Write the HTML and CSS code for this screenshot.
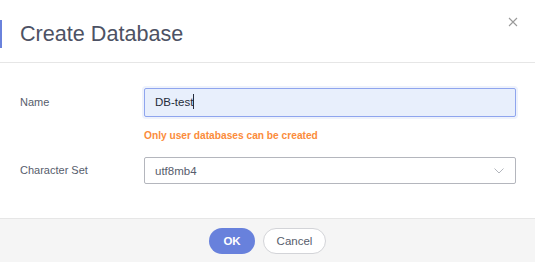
FILE: index.html
```html
<!DOCTYPE html>
<html lang="en">
<head>
  <meta charset="UTF-8">
  <meta name="viewport" content="width=device-width, initial-scale=1.0">
  <title>Create Database</title>
  <link rel="stylesheet" href="styles.css">
</head>
<body>
  <div class="dialog">
    <div class="dialog-header">
      <h1 class="dialog-title">Create Database</h1>
      <button class="close-btn" aria-label="Close">
        <svg width="10" height="10" viewBox="0 0 10 10">
          <path d="M1 1 L9 9 M9 1 L1 9" stroke="#9a9a9a" stroke-width="1.1" fill="none"/>
        </svg>
      </button>
    </div>

    <div class="dialog-body">
      <div class="form-row">
        <label class="form-label" for="db-name">Name</label>
        <div class="form-control">
          <div class="text-input focused" id="db-name">DB-test<span class="caret"></span></div>
          <div class="hint">Only user databases can be created</div>
        </div>
      </div>
      <div class="form-row">
        <label class="form-label">Character Set</label>
        <div class="form-control">
          <div class="select">
            <span>utf8mb4</span>
            <svg width="10" height="6" viewBox="0 0 10 6">
              <path d="M0.5 0.5 L5 5 L9.5 0.5" stroke="#b3b6bd" stroke-width="1" fill="none"/>
            </svg>
          </div>
        </div>
      </div>
    </div>

    <div class="dialog-footer">
      <button class="btn btn-primary">OK</button>
      <button class="btn btn-default">Cancel</button>
    </div>
  </div>
</body>
</html>
```

FILE: styles.css
```css
body {
  margin: 0;
  font-family: "Liberation Sans", Arial, sans-serif;
  background-color: #fff;
  color: #575d6c;
}
.dialog {
  width: 535px;
  height: 262px;
  display: flex;
  flex-direction: column;
  background-color: #fff;
}
.dialog-header {
  height: 62px;
  border-bottom: 1px solid #e6e6e6;
  display: flex;
  justify-content: space-between;
  align-items: flex-start;
  box-sizing: content-box;
}
.dialog-title {
  margin: 20px 0 0 0;
  height: 28px;
  line-height: 28px;
  border-left: 2px solid #6a82dc;
  padding-left: 18px;
  font-size: 21.6px;
  font-weight: normal;
  color: #4d5264;
}
.close-btn {
  background: none;
  border: none;
  padding: 0;
  margin: 17px 17px 0 0;
  width: 10px;
  height: 10px;
  cursor: pointer;
  display: flex;
}
.dialog-body {
  flex: 1;
  padding: 25px 19px 0 20px;
}
.form-row {
  display: flex;
  margin-bottom: 14px;
}
.form-label {
  width: 124px;
  flex-shrink: 0;
  font-size: 11px;
  line-height: 29px;
  color: #575d6c;
}
.form-row:last-child .form-label {
  line-height: 27px;
}
.form-control {
  flex: 1;
}
.text-input {
  height: 29px;
  box-sizing: border-box;
  border: 1px solid #8fa5ee;
  border-radius: 2px;
  background-color: #e8effc;
  box-shadow: 0 0 0 2px #eef2fc;
  padding: 0 10px;
  font-size: 11.5px;
  line-height: 27px;
  color: #252b3a;
}
.caret {
  display: inline-block;
  width: 1px;
  height: 15px;
  background-color: #252b3a;
  vertical-align: -3px;
}
.hint {
  margin-top: 12px;
  font-size: 10.2px;
  line-height: 14px;
  font-weight: bold;
  color: #fb8c3b;
}
.select {
  height: 27px;
  box-sizing: border-box;
  border: 1px solid #b4b6bd;
  border-radius: 2px;
  padding: 0 11px 0 10px;
  display: flex;
  align-items: center;
  justify-content: space-between;
  font-size: 11.5px;
  color: #575d6c;
}
.dialog-footer {
  height: 44px;
  border-top: 1px solid #e6e6e6;
  background-color: #f5f5f5;
  display: flex;
  justify-content: center;
  align-items: flex-start;
  gap: 8px;
  padding-top: 9px;
  box-sizing: border-box;
}
.btn {
  height: 26px;
  border-radius: 13px;
  font-family: inherit;
  font-size: 11.5px;
  cursor: pointer;
  padding: 0;
}
.btn-primary {
  width: 46px;
  border: none;
  background-color: #6881dc;
  color: #fff;
  font-weight: bold;
}
.btn-default {
  width: 63px;
  border: 1px solid #d3d4d8;
  background-color: #fff;
  color: #575d6c;
}
```
